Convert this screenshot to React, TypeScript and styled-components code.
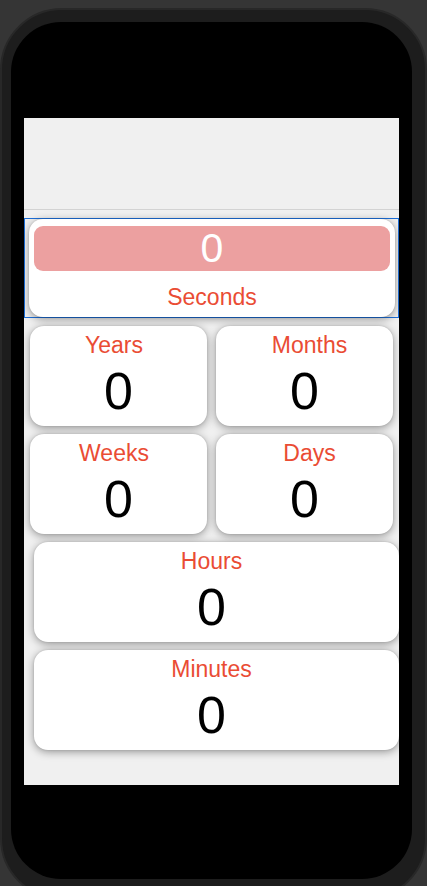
import React from 'react';
import styled, { createGlobalStyle } from 'styled-components';

const Global = createGlobalStyle`
  html, body {
    margin: 0;
    padding: 0;
    background: #353535;
    overflow: hidden;
  }
  * { box-sizing: border-box; }
`;

const Stage = styled.div`
  width: 427px;
  height: 886px;
  padding-top: 8px;
  overflow: hidden;
`;

const Device = styled.div`
  width: 427px;
  height: 892px;
  border-radius: 62px;
  background: #1d1d1d;
  border: 2px solid #282828;
  padding: 12px 13px 0 9px;
`;

const Bezel = styled.div`
  width: 401px;
  height: 857px;
  background: #000;
  border-radius: 50px;
  padding: 96px 0 0 13px;
`;

const Screen = styled.div`
  width: 375px;
  height: 667px;
  background: #f0f0f0;
  display: flex;
  flex-direction: column;
  overflow: hidden;
  font-family: 'Liberation Sans', Arial, sans-serif;
`;

const Header = styled.div`
  height: 92px;
  flex: none;
  background: #f0f0f0;
  border-bottom: 1px solid #d3d3d3;
`;

const Content = styled.div`
  padding-top: 8px;
  display: flex;
  flex-direction: column;
  gap: 8px;
`;

const Selection = styled.div`
  height: 100px;
  border: 1px solid #1d6fd9;
  padding: 0 3px 0 4px;
`;

const shadow = '0 2px 8px rgba(0, 0, 0, 0.38), 0 0 2px rgba(0, 0, 0, 0.15)';

const Card = styled.div<{ $wide?: boolean }>`
  background: #fff;
  border-radius: 14px;
  box-shadow: ${shadow};
  height: 100px;
  display: flex;
  flex-direction: column;
  align-items: center;
  padding-top: 6px;
  ${(p) => (p.$wide ? 'width: 365px; margin-left: 10px; padding-right: 10px;' : '')}
`;

const SecondsCard = styled.div`
  height: 98px;
  background: #fff;
  border-radius: 14px;
  box-shadow: ${shadow};
  padding: 7px 5px 0 5px;
  display: flex;
  flex-direction: column;
  align-items: stretch;
`;

const SecondsBar = styled.div`
  height: 45px;
  border-radius: 9px;
  background: #eca0a0;
  color: #fff;
  font-size: 41px;
  line-height: 45px;
  text-align: center;
`;

const Label = styled.div<{ $shift?: number }>`
  color: #ea4c34;
  font-size: 23px;
  line-height: 26px;
  text-align: center;
  ${(p) =>
    p.$shift && p.$shift < 0
      ? `padding-right: ${-p.$shift * 2}px;`
      : p.$shift
      ? `padding-left: ${p.$shift * 2}px;`
      : ''}
`;

const SecondsLabel = styled(Label)`
  margin-top: 13px;
`;

const Value = styled.div`
  color: #000;
  font-size: 52px;
  line-height: 52px;
  margin-top: 7px;
`;

const Grid = styled.div`
  display: grid;
  grid-template-columns: 177px 177px;
  grid-auto-rows: 100px;
  column-gap: 9px;
  row-gap: 8px;
  padding: 0 6px;
`;

const List = styled.div`
  display: flex;
  flex-direction: column;
  gap: 8px;
`;

const halves = [
  { label: 'Years', shift: -4.5 },
  { label: 'Months', shift: 5 },
  { label: 'Weeks', shift: -4.5 },
  { label: 'Days', shift: 5 },
];

const wides = ['Hours', 'Minutes'];

export default function App() {
  return (
    <>
      <Global />
      <Stage>
        <Device>
          <Bezel>
            <Screen>
              <Header />
              <Content>
                <Selection>
                  <SecondsCard>
                    <SecondsBar>0</SecondsBar>
                    <SecondsLabel>Seconds</SecondsLabel>
                  </SecondsCard>
                </Selection>
                <Grid>
                  {halves.map((h) => (
                    <Card key={h.label}>
                      <Label $shift={h.shift}>{h.label}</Label>
                      <Value>0</Value>
                    </Card>
                  ))}
                </Grid>
                <List>
                  {wides.map((w) => (
                    <Card key={w} $wide>
                      <Label>{w}</Label>
                      <Value>0</Value>
                    </Card>
                  ))}
                </List>
              </Content>
            </Screen>
          </Bezel>
        </Device>
      </Stage>
    </>
  );
}
